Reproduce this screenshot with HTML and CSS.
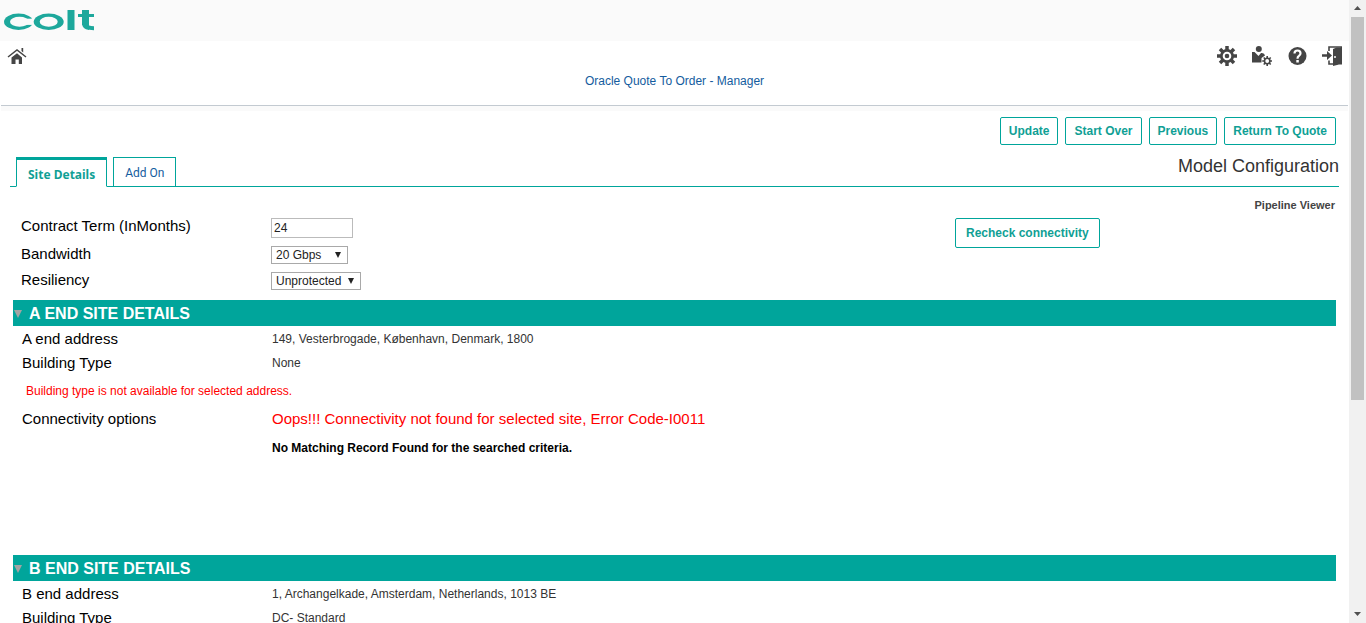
FILE: index.html
```
<!DOCTYPE html>
<html lang="en">
<head>
<meta charset="utf-8">
<title>Model Configuration</title>
<link rel="stylesheet" href="styles.css">
</head>
<body>
<div class="page">
  <header class="brand">
    <svg class="logo" width="92" height="22" viewBox="0 0 92 22" role="img" aria-label="colt">
      <ellipse cx="15.500" cy="12.800" rx="14.500" ry="8.200" fill="#1da89c"/>
      <ellipse cx="16.500" cy="12.800" rx="9.500" ry="5" fill="#fafafa"/>
      <rect x="23" y="9.700" width="8" height="6.200" fill="#fafafa"/>
      <ellipse cx="45.700" cy="12.800" rx="15" ry="8.200" fill="#1da89c"/>
      <ellipse cx="45.700" cy="12.800" rx="9" ry="5" fill="#fafafa"/>
      <g fill="#1da89c">
        <rect x="64.500" y="1" width="7" height="20"/>
        <rect x="75" y="5" width="16" height="3"/>
        <rect x="79" y="1" width="7" height="15"/>
      </g>
      <path d="M82.500 14 Q82.500 19.300 91 19.300" fill="none" stroke="#1da89c" stroke-width="4"/>
      <path d="M79 14 Q79 20 86 21 V15 Z" fill="#1da89c"/>
    </svg>
  </header>
  <nav class="topnav">
    <div class="tools">
      <a href="#" class="tool" aria-label="Home">
        <svg width="20" height="20" viewBox="0 0 20 20"><path d="M1 11 L10 4 L19 11" fill="none" stroke="#454545" stroke-width="1.500"/><path d="M4.500 11.500 L10 7.300 L15 11.500 V18 H11.800 V13.500 H8.500 V18 H4.500 Z M14.500 2 H16.200 V6.500 L14.500 5 Z" fill="#454545"/></svg>
      </a>
      <div class="tool-group">
        <a href="#" class="tool" aria-label="Settings">
          <svg width="20" height="20" viewBox="0 0 20 20"><g stroke="#454545" stroke-width="3.500"><path d="M10 0V20M0 10H20M3 3L17 17M17 3L3 17"/></g><circle cx="10" cy="10" r="7" fill="#454545"/><circle cx="10" cy="10" r="3.300" fill="none" stroke="#fff" stroke-width="2"/></svg>
        </a>
        <a href="#" class="tool" aria-label="User administration">
          <svg width="20" height="20" viewBox="0 0 20 20"><circle cx="6.800" cy="3" r="3" fill="#454545"/><path d="M0 6 H2.500 L6.500 10 L9 7 Q12.500 6.500 13 9.500 L9.500 12 V16.500 H0 Z" fill="#454545"/><g stroke="#454545" stroke-width="1.600"><path d="M15.200 10V20M10.200 15H20.200M11.700 11.500L18.700 18.500M18.700 11.500L11.700 18.500"/></g><circle cx="15.200" cy="15" r="2.700" fill="#fff" stroke="#454545" stroke-width="1.600"/></svg>
        </a>
        <a href="#" class="tool" aria-label="Help">
          <svg width="20" height="20" viewBox="0 0 20 20"><circle cx="10.500" cy="10" r="9" fill="#454545"/><path d="M7.500 7.500 Q7.500 4.500 10.500 4.500 T13.500 7.300 Q13.500 9 11.800 10 Q10.500 10.700 10.500 12.700" fill="none" stroke="#fff" stroke-width="2.200"/><rect x="9.300" y="14" width="2.500" height="2.500" fill="#fff"/></svg>
        </a>
        <a href="#" class="tool" aria-label="Log out">
          <svg width="20" height="20" viewBox="0 0 20 20"><path d="M7 5 V1 H19.500 V5 M7 14.500 V18 H12" fill="none" stroke="#454545" stroke-width="1.600"/><path d="M11 3 L14.500 1.500 H20 V18.500 H17 L11 20 Z M0 8.300 H5 V5 L10 9.500 L5 14 V10.700 H0 Z" fill="#454545"/><circle cx="13" cy="11" r="1" fill="#fff"/></svg>
        </a>
      </div>
    </div>
    <a class="app-link" href="#">Oracle Quote To Order - Manager</a>
  </nav>
  <main class="content">
    <div class="actions">
      <button class="btn">Update</button>
      <button class="btn">Start Over</button>
      <button class="btn">Previous</button>
      <button class="btn">Return To Quote</button>
    </div>
    <div class="tabbar">
      <div class="tabs">
        <a class="tab tab-active" href="#">Site Details</a>
        <a class="tab" href="#">Add On</a>
      </div>
      <h1 class="title">Model Configuration</h1>
    </div>
    <div class="viewer"><a href="#">Pipeline Viewer</a></div>
    <div class="config">
      <div class="fields">
        <div class="field field-tall"><label for="term">Contract Term (InMonths)</label><input id="term" class="term" type="text" value="24"></div>
        <div class="field"><label for="bandwidth">Bandwidth</label><span class="picker"><select id="bandwidth" class="select bandwidth"><option>20 Gbps</option></select></span></div>
        <div class="field"><label for="resiliency">Resiliency</label><span class="picker"><select id="resiliency" class="select resiliency"><option>Unprotected</option></select></span></div>
      </div>
      <div class="recheck"><button class="btn btn-recheck">Recheck connectivity</button></div>
    </div>
    <section class="site site-a">
      <h2 class="site-head"><span class="caret"></span>A END SITE DETAILS</h2>
      <dl class="row"><dt>A end address</dt><dd>149, Vesterbrogade, København, Denmark, 1800</dd></dl>
      <dl class="row"><dt>Building Type</dt><dd>None</dd></dl>
      <p class="warning">Building type is not available for selected address.</p>
      <dl class="row"><dt>Connectivity options</dt><dd class="error">Oops!!! Connectivity not found for selected site, Error Code-I0011</dd></dl>
      <p class="empty">No Matching Record Found for the searched criteria.</p>
    </section>
    <section class="site">
      <h2 class="site-head"><span class="caret"></span>B END SITE DETAILS</h2>
      <dl class="row"><dt>B end address</dt><dd>1, Archangelkade, Amsterdam, Netherlands, 1013 BE</dd></dl>
      <dl class="row"><dt>Building Type</dt><dd>DC- Standard</dd></dl>
    </section>
  </main>
</div>
<div class="scrollbar" aria-hidden="true">
  <svg width="17" height="17" viewBox="0 0 17 17"><path d="M5 10 L8.500 6 L12 10 Z" fill="#505050"/></svg>
  <div class="track"><div class="thumb"></div></div>
  <svg width="17" height="17" viewBox="0 0 17 17"><path d="M5 6 L8.500 10 L12 6 Z" fill="#505050"/></svg>
</div>
</body>
</html>
```
FILE: styles.css
```
* { box-sizing: border-box; }
body {
  margin: 0;
  display: flex;
  height: 100vh;
  overflow: hidden;
  background: #fff;
  color: #333;
  font: 12px/16px "Liberation Sans", Arial, sans-serif;
}
h1, h2, p, dl, dd { margin: 0; }
a { text-decoration: none; color: inherit; }
.page { flex: 1; min-width: 0; overflow: hidden; }

.brand { height: 41px; padding: 9px 3px; background: #fafafa; }
.logo { display: block; }
.topnav {
  margin: 0 1px;
  padding: 5px 6px 16px;
  border-bottom: 1px solid #c3cad1;
  box-shadow: 0 5px #fafafa;
}
.tools { display: flex; justify-content: space-between; }
.tool { display: block; height: 20px; }
.tool svg { display: block; }
.tool-group { display: flex; gap: 15px; }
.app-link { display: block; margin-top: 7px; text-align: center; color: #145c9e; }

.content { padding: 11px 13px 0; }
.actions { display: flex; justify-content: flex-end; gap: 7px; }
.btn {
  height: 28px;
  padding: 0 8px;
  border: 1px solid #00a59b;
  border-radius: 2px;
  background: #fff;
  color: #109f95;
  font: bold 12px/16px "Liberation Sans", Arial, sans-serif;
}
.tabbar {
  display: flex;
  justify-content: space-between;
  margin: 12px -3px 0;
  padding-left: 6px;
  height: 30px;
  border-bottom: 1px solid #00a59b;
}
.tabs { display: flex; gap: 6px; height: 30px; }
.tab {
  height: 30px;
  padding: 7px 11px;
  border: 1px solid #00a59b;
  color: #145c9e;
  font: 12px/16px Roboto, Tahoma, sans-serif;
}
.tab-active {
  border-top-width: 3px;
  border-bottom-color: #fff;
  background: #fff;
  color: #109f95;
  font-family: "Noto Sans", Tahoma, sans-serif;
  font-weight: bold;
}
.title { font-size: 18px; line-height: 18px; font-weight: normal; }
.viewer { margin-top: 10px; padding-right: 1px; text-align: right; font-size: 11px; font-weight: bold; color: #444; }

.config { display: flex; margin-top: 5px; }
.fields { width: 942px; padding-left: 8px; }
.field { display: flex; height: 26px; }
.field-tall { height: 28px; }
.field label { width: 250px; font-size: 15px; line-height: 16px; color: #000; }
.term {
  width: 82px;
  height: 20px;
  padding: 0 2px;
  border: 1px solid #bbb;
  color: #222;
  font: 12px/16px "Liberation Sans", Arial, sans-serif;
}
.picker { position: relative; height: 18px; }
.picker::after {
  content: "";
  position: absolute;
  right: 7px;
  top: 6px;
  border: solid transparent;
  border-width: 6px 3px 0;
  border-top-color: #222;
  pointer-events: none;
}
.select {
  appearance: none;
  display: block;
  height: 18px;
  padding: 0 4px;
  border: 1px solid #a9a9a9;
  border-radius: 0;
  background: #fff;
  color: #222;
  font: 12px/16px "Liberation Sans", Arial, sans-serif;
}
.bandwidth { width: 77px; }
.resiliency { width: 90px; }
.btn-recheck { height: 30px; padding: 0 10px; }

.site-a { height: 255px; margin-top: 2px; }
.site-head {
  display: flex;
  align-items: center;
  height: 26px;
  margin-bottom: 1px;
  padding: 2px 1px 0;
  background: #00a59b;
  color: #fff;
  font-size: 16px;
}
.caret {
  margin-right: 7px;
  border: solid transparent;
  border-width: 8px 4px 0;
  border-top-color: #a3a3a3;
}
.row { display: flex; height: 24px; padding-left: 9px; line-height: 24px; }
.row dt { width: 250px; font-size: 15px; color: #000; }
.warning { padding: 8px 13px; color: #f00; }
.row .error { color: #f00; font-size: 15px; }
.empty { margin: 9px 0 0 259px; color: #000; font-weight: bold; }

.scrollbar { display: flex; flex-direction: column; width: 17px; background: #f1f1f1; }
.scrollbar svg { display: block; }
.track { flex: 1; padding: 0 2px; }
.thumb { height: 65%; background: #c1c1c1; }
```
